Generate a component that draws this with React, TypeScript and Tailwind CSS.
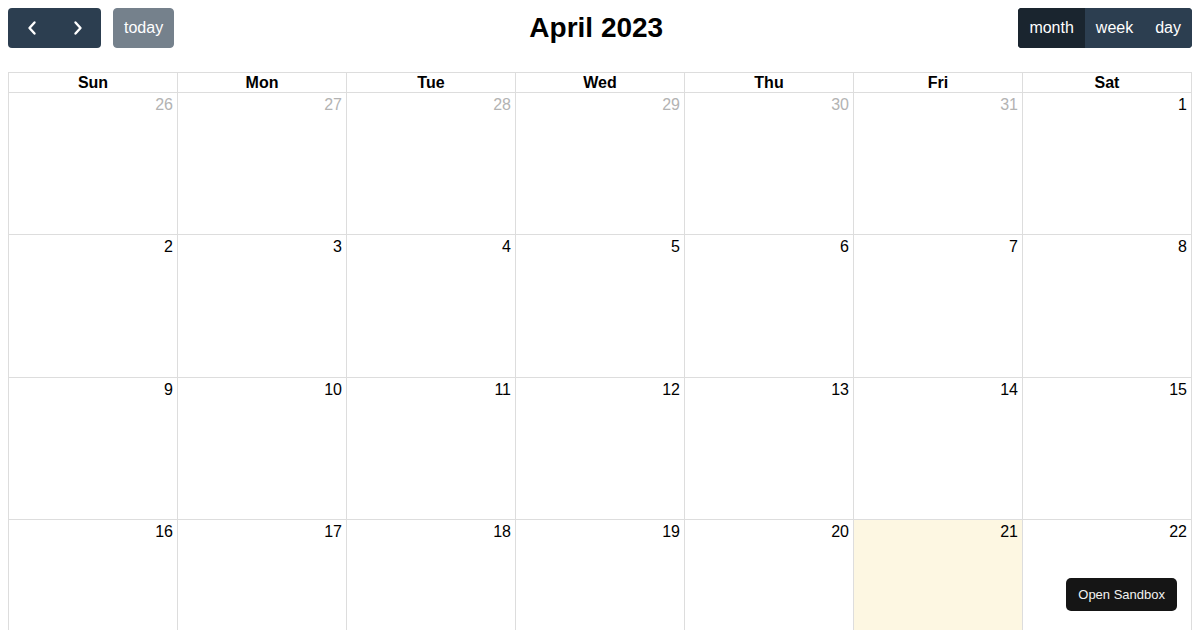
import React from 'react';

const days = ['Sun', 'Mon', 'Tue', 'Wed', 'Thu', 'Fri', 'Sat'];

type Cell = { n: number; other: boolean; today: boolean };

const buildWeeks = (): Cell[][] => {
  const cells: Cell[] = [];
  for (let d = 26; d <= 31; d++) cells.push({ n: d, other: true, today: false });
  for (let d = 1; d <= 30; d++) cells.push({ n: d, other: false, today: d === 21 });
  for (let d = 1; d <= 6; d++) cells.push({ n: d, other: true, today: false });
  const weeks: Cell[][] = [];
  for (let i = 0; i < cells.length; i += 7) weeks.push(cells.slice(i, i + 7));
  return weeks;
};

const Chevron = ({ dir }: { dir: 'left' | 'right' }) => (
  <svg width="10" height="16" viewBox="0 0 10 16" fill="none" stroke="currentColor" strokeWidth="2.4" strokeLinecap="round" strokeLinejoin="round">
    {dir === 'left' ? <path d="M7.5 2.5 L2.5 8 L7.5 13.5" /> : <path d="M2.5 2.5 L7.5 8 L2.5 13.5" />}
  </svg>
);

export default function App() {
  const weeks = buildWeeks();

  return (
    <div className="m-2 text-black" style={{ fontFamily: '"Liberation Sans", Arial, sans-serif' }}>
      <div className="flex items-center justify-between mb-6 h-[40px]">
        <div className="flex items-center gap-3">
          <div className="flex h-[40px] rounded-[4px] overflow-hidden bg-[#2c3e50] text-white">
            <button className="w-[47px] flex items-center justify-center">
              <Chevron dir="left" />
            </button>
            <button className="w-[46px] flex items-center justify-center">
              <Chevron dir="right" />
            </button>
          </div>
          <button className="h-[40px] px-[10px] border border-[#2c3e50] rounded-[4px] bg-[#2c3e50] opacity-65 text-white text-base">
            today
          </button>
        </div>
        <h2 className="text-[28px] font-bold leading-none">April 2023</h2>
        <div className="flex h-[40px] rounded-[4px] overflow-hidden bg-[#2c3e50] text-white text-base">
          <button className="px-[10px] border border-[#1a252f] bg-[#1a252f]">month</button>
          <button className="px-[10px] border border-[#2c3e50]">week</button>
          <button className="px-[10px] border border-[#2c3e50]">day</button>
        </div>
      </div>

      <table className="w-full border-collapse table-fixed">
        <thead>
          <tr>
            {days.map((d) => (
              <th key={d} className="border border-[#ddd] h-[20px] p-0 text-base font-bold leading-[18px]">
                {d}
              </th>
            ))}
          </tr>
        </thead>
        <tbody>
          {weeks.map((w, i) => (
            <tr key={i}>
              {w.map((c, j) => (
                <td
                  key={j}
                  className={`border border-[#ddd] h-[142.4px] p-0 align-top ${c.today ? 'bg-[#fdf7e2]' : ''}`}
                >
                  <div className={`text-right px-1 pt-[2px] text-base leading-[20px] ${c.other ? 'text-[#b3b3b3]' : 'text-black'}`}>
                    {c.n}
                  </div>
                </td>
              ))}
            </tr>
          ))}
        </tbody>
      </table>

      <button className="fixed right-[23px] bottom-[19px] h-[33px] px-[12px] rounded-[5px] bg-[#151515] text-[#f2f2f2] text-[13px]">
        Open Sandbox
      </button>
    </div>
  );
}
